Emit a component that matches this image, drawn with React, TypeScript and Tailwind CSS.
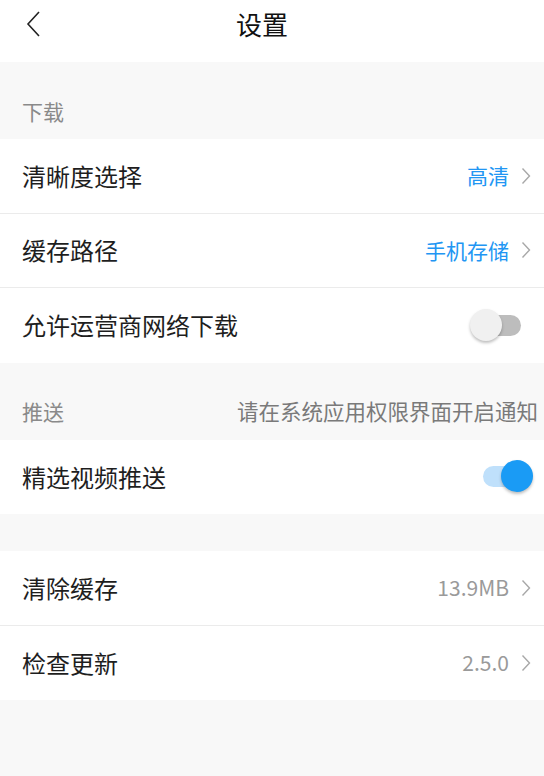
import React, { useState } from 'react';

const font = { fontFamily: '"Noto Sans CJK SC", "Noto Sans", sans-serif' };

const Chevron: React.FC = () => (
  <svg width="10" height="18" viewBox="0 0 10 18" className="ml-[12px] shrink-0">
    <path d="M1.5 1.5 L8.5 9 L1.5 16.5" fill="none" stroke="#a8a8a8" strokeWidth="1.4" />
  </svg>
);

const Switch: React.FC<{ on: boolean; onToggle: () => void }> = ({ on, onToggle }) => (
  <button
    onClick={onToggle}
    className={`relative w-[38px] h-[21px] rounded-full mr-[23px] ${on ? 'bg-[#bfe0fb]' : 'bg-[#bdbdbd]'}`}
    aria-label="toggle"
  >
    <span
      className={`absolute top-[-6px] w-[32px] h-[32px] rounded-full shadow-[0_2px_3px_rgba(0,0,0,0.25)] ${
        on ? 'left-[18px] bg-[#1a9bf5]' : 'left-[-13px] bg-[#f0f0f0]'
      }`}
    />
  </button>
);

const Row: React.FC<{ label: string; border?: boolean; children?: React.ReactNode }> = ({ label, border, children }) => (
  <div className={`h-[74.5px] bg-white flex items-center justify-between pl-[22px] ${border ? 'border-b border-[#ebebeb]' : ''}`}>
    <span className="text-[24px] text-[#1e1e1e]">{label}</span>
    <div className="flex items-center">{children}</div>
  </div>
);

const Value: React.FC<{ text: string; blue?: boolean }> = ({ text, blue }) => (
  <div className="flex items-center pr-[13px]">
    <span className={`text-[21px] ${blue ? 'text-[#2196f3]' : 'text-[#9a9a9a]'}`}>{text}</span>
    <Chevron />
  </div>
);

const App: React.FC = () => {
  const [carrier, setCarrier] = useState(false);
  const [push, setPush] = useState(true);

  return (
    <div className="w-[544px] h-[776px] bg-[#f8f8f8] flex flex-col" style={font}>
      <header className="h-[62px] bg-white relative flex items-center justify-center shrink-0">
        <button className="absolute left-[24px] top-[10px] w-[20px] h-[30px]" aria-label="back">
          <svg width="20" height="30" viewBox="0 0 20 30">
            <path d="M15 2 L4 14 L15 26" fill="none" stroke="#222" strokeWidth="1.6" />
          </svg>
        </button>
        <h1 className="text-[26px] text-[#111] mt-[-15px] mr-[20px]">设置</h1>
      </header>

      <div className="h-[77px] flex items-end pb-[12px] pl-[22px] shrink-0">
        <span className="text-[21px] text-[#8a8a8a]">下载</span>
      </div>
      <Row label="清晰度选择" border>
        <Value text="高清" blue />
      </Row>
      <Row label="缓存路径" border>
        <Value text="手机存储" blue />
      </Row>
      <Row label="允许运营商网络下载">
        <Switch on={carrier} onToggle={() => setCarrier(!carrier)} />
      </Row>

      <div className="h-[77px] flex items-end justify-between pb-[12px] pl-[22px] pr-[6px] shrink-0">
        <span className="text-[21px] text-[#8a8a8a]">推送</span>
        <span className="text-[21.5px] text-[#7a7a7a]">请在系统应用权限界面开启通知</span>
      </div>
      <Row label="精选视频推送">
        <Switch on={push} onToggle={() => setPush(!push)} />
      </Row>

      <div className="h-[37px] shrink-0" />
      <Row label="清除缓存" border>
        <Value text="13.9MB" />
      </Row>
      <Row label="检查更新">
        <Value text="2.5.0" />
      </Row>
    </div>
  );
};

export default App;
